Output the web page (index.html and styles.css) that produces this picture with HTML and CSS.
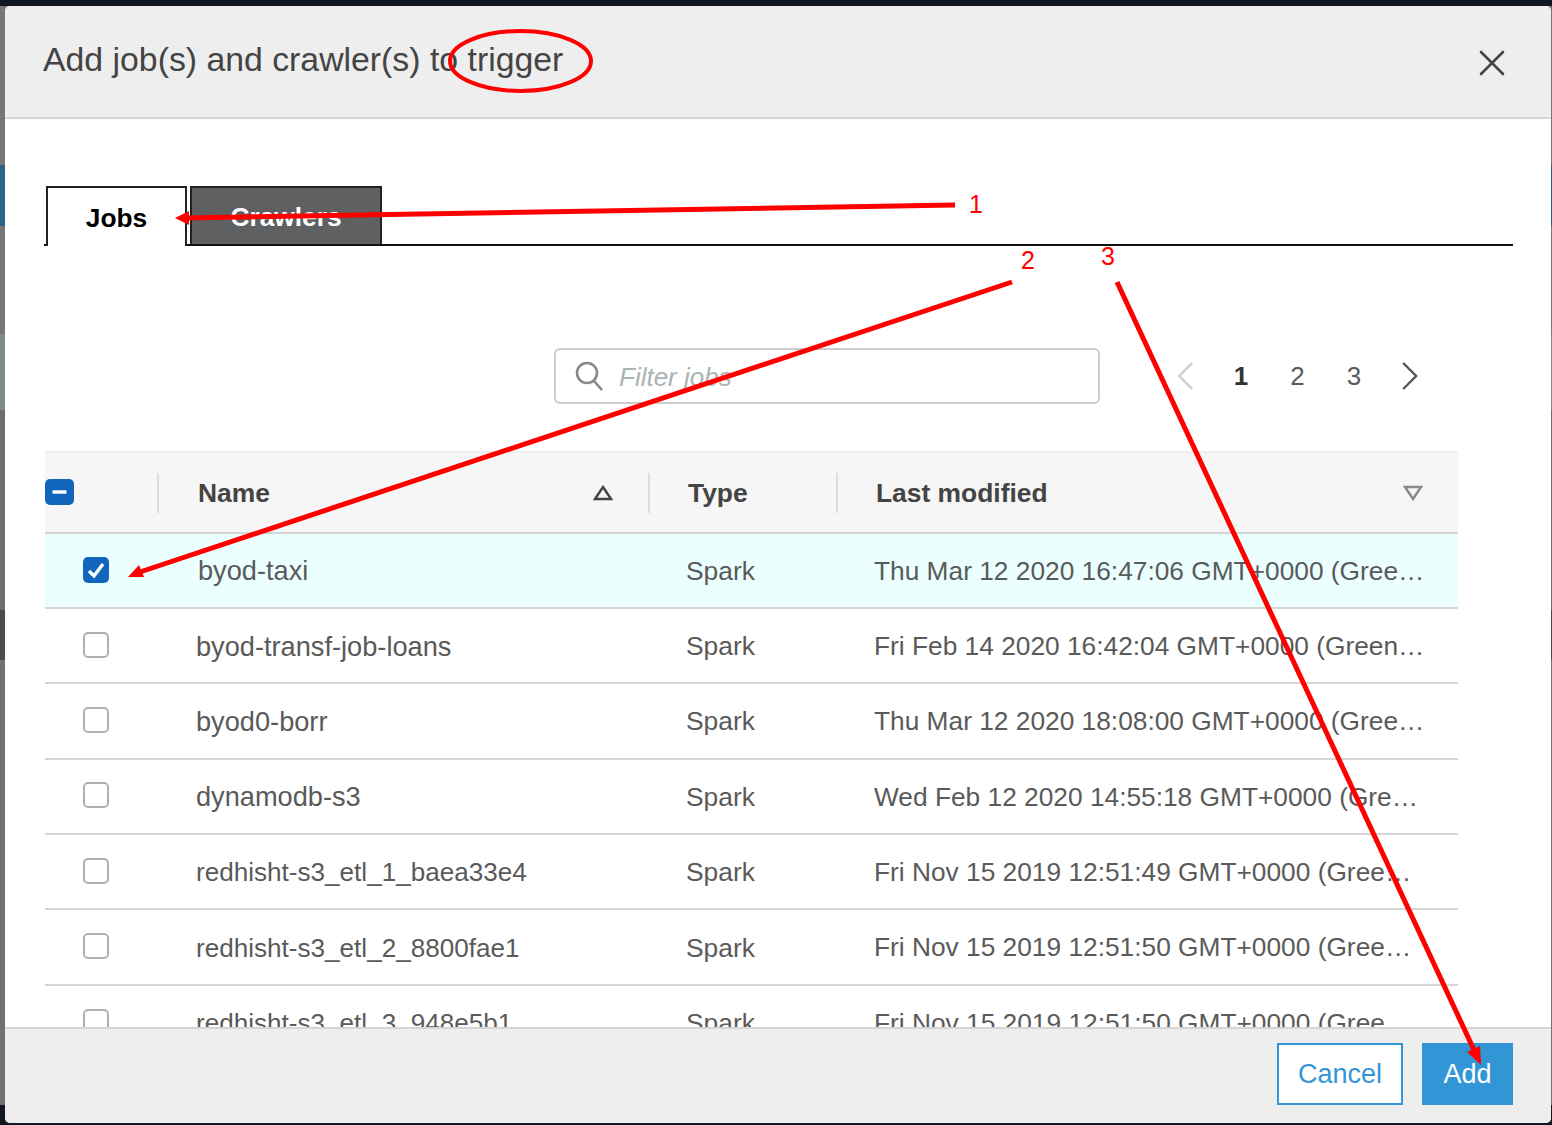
FILE: index.html
```html
<!DOCTYPE html>
<html lang="en">
<head>
  <meta charset="UTF-8" />
  <title>Add job(s) and crawler(s) to trigger</title>
  <link rel="stylesheet" href="styles.css">
</head>
<body>
  <div class="modal">
    <header class="modal-head">
      <h1>Add job(s) and crawler(s) to trigger</h1>
      <svg class="close" viewBox="0 0 26 26"><path d="M2 2 L24 24 M24 2 L2 24"/></svg>
    </header>

    <main class="modal-body">
      <div class="tabs">
        <a class="tab active">Jobs</a>
        <a class="tab">Crawlers</a>
      </div>

      <div class="toolbar">
        <div class="search">
          <svg viewBox="0 0 28 30"><circle cx="12" cy="12" r="10"/><path d="M19 20 L27 29"/></svg>
          <span>Filter jobs</span>
        </div>
        <div class="pager">
          <svg class="chev off" viewBox="0 0 18 28"><path d="M16 1 L3 14 L16 27"/></svg>
          <span class="current">1</span>
          <span>2</span>
          <span>3</span>
          <svg class="chev" viewBox="0 0 18 28"><path d="M2 1 L15 14 L2 27"/></svg>
        </div>
      </div>

      <div class="table">
        <div class="row head">
          <div class="cell check"><span class="box partial"><svg viewBox="0 0 28 26"><path d="M7 13 H21"/></svg></span></div>
          <div class="cell name sorted">Name <svg class="sort" viewBox="0 0 20 16"><path d="M10 2 L18 14 H2 Z"/></svg></div>
          <div class="cell">Type</div>
          <div class="cell sorted">Last modified <svg class="sort dim" viewBox="0 0 20 16"><path d="M2 2 H18 L10 14 Z"/></svg></div>
        </div>
        <div class="row selected">
          <div class="cell check"><span class="box on"><svg viewBox="0 0 26 26"><path d="M6 14 L11 19 L20 7"/></svg></span></div>
          <div class="cell name">byod-taxi</div>
          <div class="cell">Spark</div>
          <div class="cell date">Thu Mar 12 2020 16:47:06 GMT+0000 (Greenwich Mean Time)</div>
        </div>
        <div class="row">
          <div class="cell check"><span class="box"></span></div>
          <div class="cell name">byod-transf-job-loans</div>
          <div class="cell">Spark</div>
          <div class="cell date">Fri Feb 14 2020 16:42:04 GMT+0000 (Greenwich Mean Time)</div>
        </div>
        <div class="row">
          <div class="cell check"><span class="box"></span></div>
          <div class="cell name">byod0-borr</div>
          <div class="cell">Spark</div>
          <div class="cell date">Thu Mar 12 2020 18:08:00 GMT+0000 (Greenwich Mean Time)</div>
        </div>
        <div class="row">
          <div class="cell check"><span class="box"></span></div>
          <div class="cell name">dynamodb-s3</div>
          <div class="cell">Spark</div>
          <div class="cell date">Wed Feb 12 2020 14:55:18 GMT+0000 (Greenwich Mean Time)</div>
        </div>
        <div class="row">
          <div class="cell check"><span class="box"></span></div>
          <div class="cell name long">redhisht-s3_etl_1_baea33e4</div>
          <div class="cell">Spark</div>
          <div class="cell date">Fri Nov 15 2019 12:51:49 GMT+0000 (Greenwich Mean Time)</div>
        </div>
        <div class="row">
          <div class="cell check"><span class="box"></span></div>
          <div class="cell name long">redhisht-s3_etl_2_8800fae1</div>
          <div class="cell">Spark</div>
          <div class="cell date">Fri Nov 15 2019 12:51:50 GMT+0000 (Greenwich Mean Time)</div>
        </div>
        <div class="row">
          <div class="cell check"><span class="box"></span></div>
          <div class="cell name long">redhisht-s3_etl_3_948e5b1</div>
          <div class="cell">Spark</div>
          <div class="cell date">Fri Nov 15 2019 12:51:50 GMT+0000 (Greenwich Mean Time)</div>
        </div>
      </div>
    </main>

    <footer class="modal-foot">
      <button class="btn">Cancel</button>
      <button class="btn primary">Add</button>
    </footer>
  </div>

  <!-- red markup drawn on top of the screenshot -->
  <svg class="markup" viewBox="0 0 1552 1125">
    <ellipse cx="520.5" cy="61" rx="70.5" ry="30"/>
    <path d="M955 205 L186 218"/>
    <path d="M1012 282 L140 572"/>
    <path d="M1117 282 L1474 1050"/>
    <polygon points="175,218 189,211 189,225"/>
    <polygon points="128,577 139,565 144,577"/>
    <polygon points="1481,1065 1467,1052 1480,1046"/>
    <text x="976" y="213">1</text>
    <text x="1028" y="269">2</text>
    <text x="1108" y="265">3</text>
  </svg>
</body>
</html>
```

FILE: styles.css
```css
* {
  box-sizing: border-box;
  margin: 0;
  padding: 0;
}
html, body {
  height: 100%;
  overflow: hidden;
}
body {
  font-family: 'Liberation Sans', Arial, sans-serif;
  color: #5a5a5a;
  padding: 6px 1px 2px 5px;
  position: relative;
  /* dimmed page behind the dialog, only a sliver of it shows */
  background:
    linear-gradient(#0f1722, #0f1722) top / 100% 6px no-repeat,
    linear-gradient(to bottom,
      #777 0, #777 165px, #2d6288 165px, #2d6288 226px, #777 226px,
      #777 334px, #7f8a8a 334px, #7f8a8a 410px, #6e6e6e 410px,
      #6e6e6e 610px, #4c4c4c 610px, #4c4c4c 660px, #717171 660px,
      #717171 1105px, #111820 1105px);
}
.modal {
  height: 100%;
  display: flex;
  flex-direction: column;
  background: white;
  border-radius: 5px;
  overflow: hidden;
}
.modal-head {
  flex: none;
  height: 113px;
  background: #eee;
  border-bottom: 2px solid #d5d5d5;
  display: flex;
  align-items: center;
  justify-content: space-between;
  padding: 0 46px 5px 38px;
}
.modal-head h1 {
  font-size: 33.8px;
  font-weight: normal;
  color: #444;
}
.close {
  width: 26px;
  height: 26px;
  margin-top: 8px;
}
.close path {
  fill: none;
  stroke: #444;
  stroke-width: 2.6;
  stroke-linecap: round;
}
.modal-body {
  flex: 1;
  min-height: 0;
  overflow: hidden;
  padding: 67px 38px 0 39px;
}
.tabs {
  display: flex;
  gap: 3px;
  height: 60px;
  border-bottom: 2px solid #111;
}
.tab {
  height: 58px;
  border: 2px solid #222;
  border-bottom: none;
  padding-top: 2px;
  font-size: 26.3px;
  font-weight: bold;
  display: flex;
  align-items: center;
  justify-content: center;
  background: #5f6062;
  color: white;
  width: 192px;
}
.tab.active {
  height: 60px;
  width: 141px;
  margin-left: 2px;
  background: white;
  color: black;
}
.toolbar {
  display: flex;
  align-items: center;
  margin: 102px 0 47px 510px;
}
.search {
  width: 546px;
  height: 56px;
  border: 2px solid #ccc;
  border-radius: 6px;
  display: flex;
  align-items: center;
  gap: 16px;
  padding: 0 19px;
  font-size: 26px;
  font-style: italic;
  color: #aab4b4;
}
.search span {
  padding-top: 2px;
}
.search svg {
  width: 28px;
  height: 30px;
}
.search circle, .search path {
  fill: none;
  stroke: #888;
  stroke-width: 2.6;
}
.pager {
  display: flex;
  align-items: center;
  margin-left: 56.5px;
  font-size: 26px;
}
.pager > * {
  width: 56.4px;
  text-align: center;
}
.pager .current {
  font-weight: bold;
  color: #333;
}
.chev {
  height: 28px;
}
.chev path {
  fill: none;
  stroke: #555;
  stroke-width: 2.4;
}
.chev.off path {
  stroke: #ccc;
}
.table {
  width: 1413px;
  margin-left: 1px;
  font-size: 26.4px;
  border-top: 2px solid #eee;
}
.row {
  display: grid;
  grid-template-columns: 113px 491px 188px 1fr;
  height: 75.4px;
  border-bottom: 2px solid #d5d5d5;
}
.row.head {
  height: 80.5px;
  background: #f6f6f6;
  font-weight: bold;
  color: #444;
}
.row.selected {
  background: #ebffff;
}
.cell {
  display: flex;
  align-items: center;
  min-width: 0;
  padding: 2px 0 0 37px;
}
.name {
  font-size: 27.2px;
  padding-left: 38px;
}
.name.long {
  font-size: 26.1px;
}
.head .cell {
  padding: 2px 0 0 39px;
  position: relative;
}
.head .name {
  font-size: 26.4px;
  padding-left: 40px;
}
.head .cell::before {
  content: "";
  position: absolute;
  left: -1px;
  top: 20px;
  height: 40px;
  border-left: 2px solid #ddd;
}
.head .cell.check::before {
  display: none;
}
.head .cell.check {
  padding-left: 0;
}
.selected .name {
  padding-left: 40px;
}
.head .sorted {
  justify-content: space-between;
  padding-right: 36px;
}
.head .sorted:last-child {
  padding-right: 35px;
}
.sort {
  width: 20px;
  height: 16px;
}
.sort path {
  fill: none;
  stroke: #444;
  stroke-width: 2.4;
}
.sort.dim path {
  stroke: #888;
}
.date {
  display: block;
  padding-top: 0;
  line-height: 75px;
  font-size: 26.3px;
  white-space: nowrap;
  overflow: hidden;
  text-overflow: ellipsis;
  padding-right: 33px;
}
.row .check {
  padding-top: 0;
  padding-left: 38px;
}
.box {
  width: 26px;
  height: 26px;
  margin-top: -2px;
  border: 2px solid #b0b0b0;
  border-radius: 5px;
  background: white;
  display: block;
}
.box.on, .box.partial {
  margin-top: 0;
  border: none;
  background: #1166bb;
}
.box svg {
  display: block;
  width: 100%;
  height: 100%;
}
.box path {
  fill: none;
  stroke: white;
  stroke-width: 3.4;
}
.box.partial {
  width: 29px;
}
.modal-foot {
  flex: none;
  height: 96px;
  background: #eee;
  border-top: 2px solid #d5d5d5;
  display: flex;
  justify-content: flex-end;
  align-items: flex-start;
  gap: 19px;
  padding: 14px 38px 0 0;
}
.btn {
  font-family: inherit;
  font-size: 27px;
  height: 62px;
  width: 126px;
  background: white;
  border: 2px solid #3296d6;
  color: #3296d6;
}
.btn.primary {
  width: 91px;
  background: #3296d6;
  color: white;
}
.markup {
  position: absolute;
  left: 0;
  top: 0;
  width: 1552px;
  height: 1125px;
}
.markup ellipse, .markup path {
  fill: none;
  stroke: #f00;
  stroke-width: 5;
}
.markup ellipse {
  stroke-width: 4;
}
.markup polygon, .markup text {
  fill: #f00;
}
.markup text {
  font-size: 25px;
  text-anchor: middle;
}
```
